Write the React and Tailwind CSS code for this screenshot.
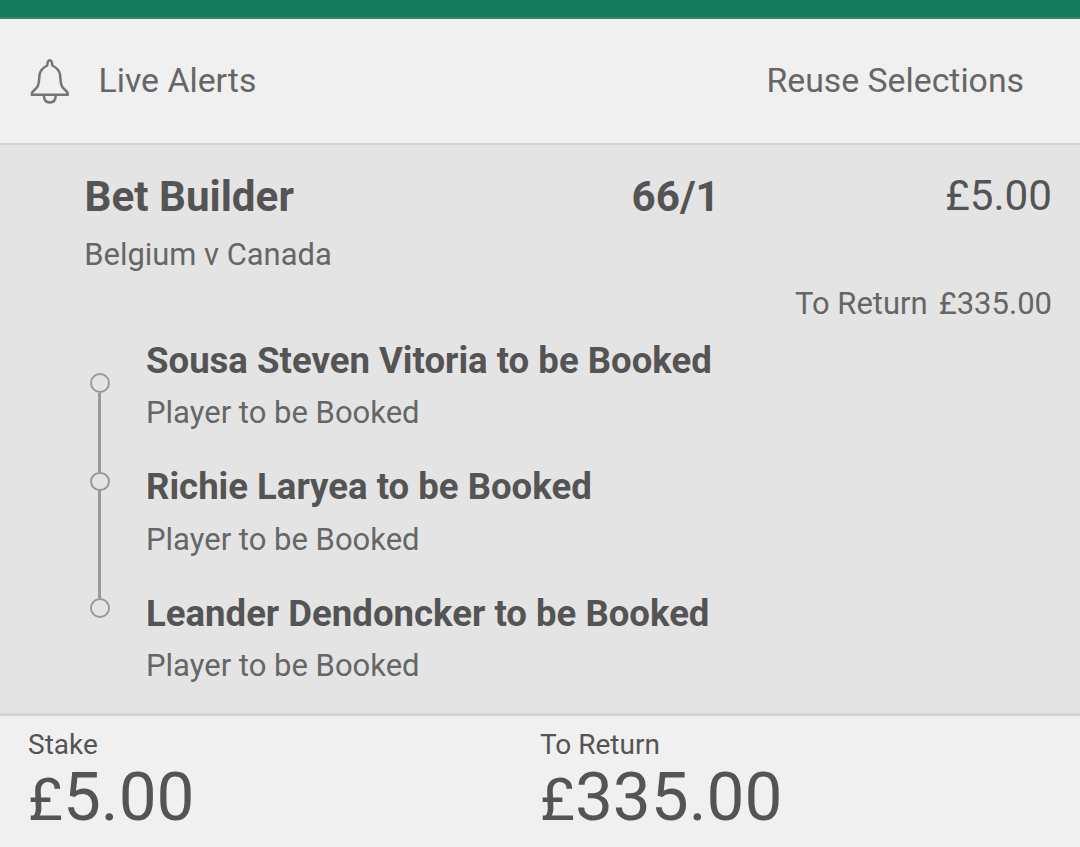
const selections = [
  { name: "Sousa Steven Vitoria to be Booked", market: "Player to be Booked" },
  { name: "Richie Laryea to be Booked", market: "Player to be Booked" },
  { name: "Leander Dendoncker to be Booked", market: "Player to be Booked" },
];

const BellIcon = () => (
  <svg className="h-[46px] w-[40px]" viewBox="0 0 40 46" fill="none" stroke="#757575" strokeWidth="2.5">
    <path d="M2 36.700V35C3 32.500 6.500 31 7.800 28C9.600 24 8.900 20 9.700 16C10.600 12 13.300 9.500 17.200 7.500C17.500 4 18 2.300 19.800 2.300C21.600 2.300 22.100 4 22.400 7.500C26.300 9.500 29 12 29.900 16C30.700 20 30 24 31.800 28C33.100 31 36.600 32.500 37.600 35V36.700Z" />
    <path d="M13.900 37C13.900 42 16.400 44.500 19.800 44.500C23.200 44.500 25.700 42 25.700 37" />
  </svg>
);

const Timeline = () => (
  <div className="flex w-5 flex-col pt-[36px]">
    <div className="h-5 w-5 rounded-full border-2 border-[#999]" />
    <div className="ml-2 h-[79px] w-[3px] bg-[#999]" />
    <div className="h-[19px] w-5 rounded-full border-2 border-[#999]" />
    <div className="ml-2 h-[107px] w-[3px] bg-[#999]" />
    <div className="h-5 w-5 rounded-full border-2 border-[#999]" />
  </div>
);

const Total = ({ label, amount }) => (
  <div>
    <div className="text-[28px] leading-[32px]">{label}</div>
    <div className="text-[67.5px] leading-[72px]">
      <span className="text-[60px]">£</span>
      {amount}
    </div>
  </div>
);

const App = () => {
  return (
    <div className="flex h-[847px] w-[1080px] flex-col overflow-hidden bg-[#f0f0f0] font-['Roboto',sans-serif] text-[#666]">
      <div className="h-[19px] shrink-0 border-b-2 border-[#2f8a6c] bg-[#147b5b]" />

      {/* Action bar */}
      <div className="flex h-[126px] shrink-0 items-center justify-between border-b-2 border-[#d4d4d4] pr-[56px] pl-[30px] text-[33.8px] leading-[40px]">
        <div className="flex items-center gap-[28.5px]">
          <BellIcon />
          <span>Live Alerts</span>
        </div>
        <span>Reuse Selections</span>
      </div>

      {/* Bet details */}
      <div className="h-[571px] shrink-0 border-b-[3px] border-[#d4d4d4] bg-[#e4e4e4] pr-[28px] pl-[84px]">
        <div className="flex pt-[26px] text-[42.2px] leading-[50px] text-[#545454]">
          <span className="w-[547.5px] pt-px pl-[0.5px] font-bold">Bet Builder</span>
          <span className="pt-px font-bold">66/1</span>
          <span className="ml-auto">£5.00</span>
        </div>
        <div className="mt-[15px] pl-[0.3px] text-[30.9px] leading-[36px]">Belgium v Canada</div>
        <div className="mt-[13px] flex justify-end gap-[11px] text-[31px] leading-[36px]">
          <span>To Return</span>
          <span>£335.00</span>
        </div>
        <div className="mt-[15px] flex gap-[36px] pl-[6px]">
          <Timeline />
          <div>
            {selections.map((item) => (
              <div key={item.name} className="h-[126.4px]">
                <div className="text-[36.55px] leading-[48px] font-bold text-[#545454]">{item.name}</div>
                <div className="mt-[10.2px] text-[31px] leading-[36px]">{item.market}</div>
              </div>
            ))}
          </div>
        </div>
      </div>

      {/* Totals */}
      <div className="grid flex-1 grid-cols-[512px_1fr] pt-[13px] pl-[28px] text-[#545454]">
        <Total label="Stake" amount="5.00" />
        <Total label="To Return" amount="335.00" />
      </div>
    </div>
  );
};

export default App;
